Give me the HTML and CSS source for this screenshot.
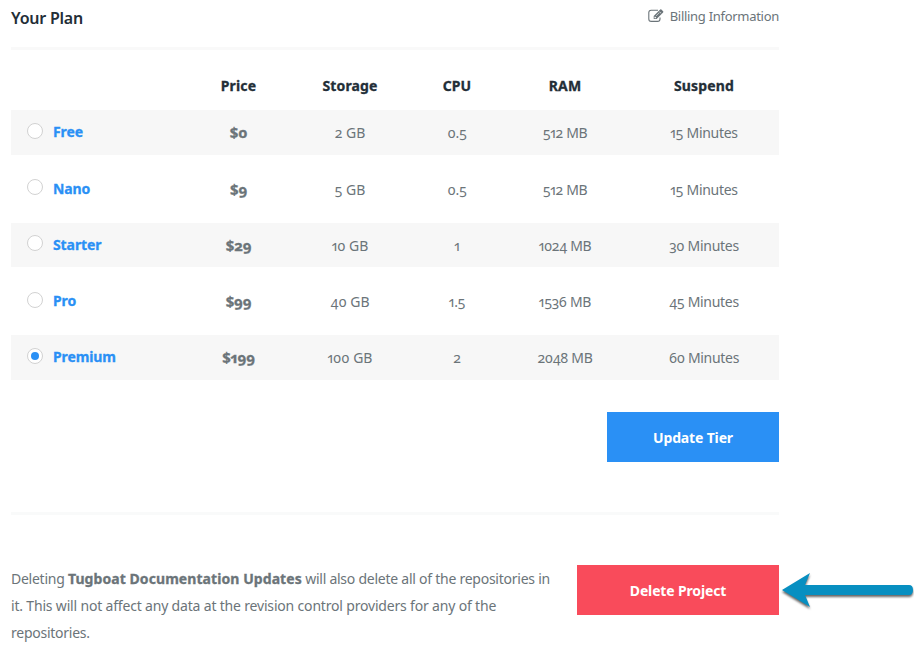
FILE: index.html
```html
<!DOCTYPE html>
<html lang="en">
<head>
<meta charset="utf-8">
<title>Your Plan</title>
<link rel="stylesheet" href="styles.css">
</head>
<body>
<main class="page">
  <header class="plan-header">
    <h1>Your Plan</h1>
    <a class="billing">
      <svg class="edit-icon" viewBox="0 0 16 14" width="16" height="14" fill="none" stroke="currentColor">
        <path d="M10 1.2H3.2Q.8 1.2 .8 3.6V10Q.8 12.4 3.2 12.4H9.6Q12 12.4 12 10V8.5" stroke-width="1.1"/>
        <path fill="currentColor" stroke="none" d="M5.7 7.1 12.2.6Q12.8 0 13.4.6L15.1 2.3Q15.7 2.9 15.1 3.5L8.6 10H5.7ZM11.3 2.7 13 4.4 13.3 4.1 11.6 2.4ZM6.5 7.9V9.2H7.8L8.3 8.7 7 7.4ZM7.9 6.7 8.3 7.1 11.6 3.8 11.2 3.4Z" fill-rule="evenodd"/>
      </svg>
      <span>Billing Information</span>
    </a>
  </header>
  <section class="plans">
    <div class="row head"><span></span><span>Price</span><span>Storage</span><span>CPU</span><span>RAM</span><span>Suspend</span></div>
    <div class="rows">
      <div class="row tier"><label><i class="radio"></i>Free</label><b>$0</b><span>2 GB</span><span>0.5</span><span>512 MB</span><span>15 Minutes</span></div>
      <div class="row tier"><label><i class="radio"></i>Nano</label><b>$9</b><span>5 GB</span><span>0.5</span><span>512 MB</span><span>15 Minutes</span></div>
      <div class="row tier"><label><i class="radio"></i>Starter</label><b>$29</b><span>10 GB</span><span>1</span><span>1024 MB</span><span>30 Minutes</span></div>
      <div class="row tier"><label><i class="radio"></i>Pro</label><b>$99</b><span>40 GB</span><span>1.5</span><span>1536 MB</span><span>45 Minutes</span></div>
      <div class="row tier"><label><i class="radio checked"></i>Premium</label><b>$199</b><span>100 GB</span><span>2</span><span>2048 MB</span><span>60 Minutes</span></div>
    </div>
    <button class="btn update">Update Tier</button>
  </section>
  <section class="delete">
    <p>Deleting <b>Tugboat Documentation Updates</b> will also delete all of the repositories in<br><span class="detail">it. This will not affect any data at the revision control providers for any of the</span><br>repositories.</p>
    <button class="btn danger">Delete Project</button>
    <svg class="arrow" viewBox="0 0 134 44" width="134" height="44">
      <path d="M1 20 29 3 24 15H128Q132 15 132 20T128 25H24L29 37Z"/>
    </svg>
  </section>
</main>
</body>
</html>
```
FILE: styles.css
```css
* { box-sizing: border-box; }
body {
  margin: 0;
  background: #fff;
  color: #6b7479;
  font: 14px/27px "Noto Sans", "Open Sans", sans-serif;
  font-feature-settings: "onum", "pnum";
}
.page { width: 768px; margin-left: 11px; }
.plan-header {
  display: flex;
  justify-content: space-between;
  height: 50px;
  border-bottom: 3px solid #f9f9f9;
}
h1 {
  margin: 5px 0 0;
  color: #232e37;
  font-size: 16px;
  font-weight: 600;
  line-height: 27px;
  letter-spacing: -0.22px;
}
.billing {
  display: flex;
  gap: 6px;
  margin-top: 3px;
  font-size: 13px;
  letter-spacing: -0.29px;
}
.edit-icon { margin-top: 6px; }
.row {
  display: grid;
  grid-template-columns: 179px 97px 126px 88px 128px 150px;
  align-items: center;
  text-align: center;
}
.head {
  height: 60px;
  padding-top: 10px;
  color: #232e37;
  font-weight: 700;
  letter-spacing: 0.15px;
  -webkit-text-stroke: 0.3px currentColor;
}
.rows { display: grid; gap: 11.8px; }
.tier { height: 44.5px; padding-top: 1px; letter-spacing: -0.3px; }
.tier:nth-child(odd) { background: #f7f7f7; }
.tier b {
  font-size: 15px;
  font-weight: 700;
  letter-spacing: -0.1px;
  -webkit-text-stroke: 0.3px currentColor;
}
.tier b + span { letter-spacing: 0; }
.tier label {
  display: flex;
  align-items: center;
  gap: 10px;
  margin-top: -2px;
  padding-left: 16px;
  color: #2a90f5;
  font-weight: 700;
  letter-spacing: -0.1px;
  -webkit-text-stroke: 0.3px currentColor;
}
.radio {
  display: grid;
  place-items: center;
  width: 16px;
  height: 16px;
  margin-top: -2px;
  border: 1px solid #d2d2d2;
  border-radius: 50%;
  background: #fff;
}
.checked::after {
  content: "";
  width: 8px;
  height: 8px;
  border-radius: 50%;
  background: #2a90f5;
}
.btn {
  display: block;
  height: 50px;
  padding: 1px 0 0;
  border: 0;
  color: #fff;
  font: 700 14px/27px "Noto Sans", sans-serif;
  letter-spacing: -0.15px;
}
.update { width: 172px; margin: 32px 0 50px auto; background: #2a90f5; }
.delete {
  position: relative;
  display: flex;
  justify-content: space-between;
  padding-top: 50px;
  border-top: 3px solid #f9fafa;
}
.delete p { margin: 0; white-space: nowrap; letter-spacing: -0.25px; }
.delete b { letter-spacing: 0.07px; -webkit-text-stroke: 0.3px currentColor; }
.detail { letter-spacing: -0.18px; }
.danger { width: 202px; background: #f94b5b; }
.arrow {
  position: absolute;
  left: 770px;
  top: 55px;
  fill: #078fc1;
  filter: drop-shadow(0 2px 1px rgb(0 0 0 / 60%));
}
```
